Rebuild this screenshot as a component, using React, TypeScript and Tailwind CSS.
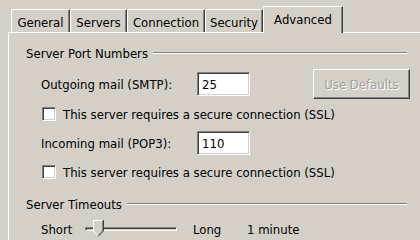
import React from 'react';

const FONT = "font-['DejaVu_Sans_Condensed','Liberation_Sans',sans-serif] text-[13px] leading-none text-black";

const Tab: React.FC<{ label: string; width: string; selected?: boolean }> = ({ label, width, selected }) => {
    if (selected) {
        return (
            <div
                className={`relative z-10 -mb-px flex h-[27px] items-start justify-center rounded-tl-[2px] border-l border-t border-r border-white border-r-[#404040] bg-[#d4d0c8] pt-[6px] shadow-[inset_-1px_0_0_#808080] ${width}`}
            >
                {label}
            </div>
        );
    }
    return (
        <div
            className={`flex h-[23px] items-start justify-center rounded-tl-[2px] border-l border-t border-r border-white border-r-[#404040] pt-[6px] shadow-[inset_-1px_0_0_#808080] ${width}`}
        >
            {label}
        </div>
    );
};

const GroupHeader: React.FC<{ label: string; className?: string }> = ({ label, className }) => (
    <div className={`flex h-[16px] items-center pl-[17px] pr-[13px] ${className ?? ''}`}>
        <span>{label}</span>
        <div className="ml-[5px] h-[2px] flex-1 border-t border-b border-t-[#808080] border-b-white" />
    </div>
);

const Sunken: React.FC<{ className: string; children?: React.ReactNode }> = ({ className, children }) => (
    <div
        className={`border border-t-[#808080] border-l-[#808080] border-b-white border-r-white bg-white shadow-[inset_1px_1px_0_#404040,inset_-1px_-1px_0_#d4d0c8] ${className}`}
    >
        {children}
    </div>
);

const Checkbox: React.FC<{ label: string; className?: string }> = ({ label, className }) => (
    <div className={`flex h-[16px] items-center pl-[33px] ${className ?? ''}`}>
        <Sunken className="h-[14px] w-[14px]" />
        <span className="ml-[7px]">{label}</span>
    </div>
);

const PortField: React.FC<{ value: string }> = ({ value }) => (
    <Sunken className="flex h-[24px] w-[53px] items-center pl-[4px]">{value}</Sunken>
);

export default function App() {
    return (
        <div className={`h-[240px] w-[420px] overflow-hidden bg-[#d4d0c8] ${FONT}`}>
            <div className="flex h-[32px] items-end pl-[11px]">
                <Tab label="General" width="w-[59px]" />
                <Tab label="Servers" width="w-[57px]" />
                <Tab label="Connection" width="w-[78px]" />
                <Tab label="Security" width="w-[58px]" />
                <Tab label="Advanced" width="w-[80px]" selected />
            </div>

            <div className="ml-[8px] h-[208px] border-l border-t border-white">
                <GroupHeader label="Server Port Numbers" className="mt-[12px]" />

                <div className="mt-[8px] flex h-[30px] items-center pl-[32px] pr-[10px]">
                    <span className="w-[156px]">Outgoing mail (SMTP):</span>
                    <PortField value="25" />
                    <button className="ml-auto h-[30px] w-[97px] border border-t-white border-l-white border-b-[#404040] border-r-[#404040] text-[#a0a0a0] shadow-[inset_-1px_-1px_0_#808080] [text-shadow:1px_1px_0_#ffffff]">
                        Use Defaults
                    </button>
                </div>

                <Checkbox label="This server requires a secure connection (SSL)" className="mt-[7px]" />

                <div className="mt-[9px] flex h-[24px] items-center pl-[32px]">
                    <span className="w-[156px]">Incoming mail (POP3):</span>
                    <PortField value="110" />
                </div>

                <Checkbox label="This server requires a secure connection (SSL)" className="mt-[9px]" />

                <GroupHeader label="Server Timeouts" className="mt-[16px]" />

                <div className="mt-[9px] flex h-[16px] items-center pl-[32px]">
                    <span className="w-[44px]">Short</span>
                    <div className="relative h-[16px] w-[92px]">
                        <div className="absolute left-0 right-0 top-[6px] h-[4px] border border-t-[#808080] border-l-[#808080] border-b-white border-r-white shadow-[inset_1px_1px_0_#404040]" />
                        <svg className="absolute left-[8px] top-[-1px]" width="11" height="17" viewBox="0 0 11 17">
                            <polygon points="0.5,0.5 9.5,0.5 9.5,11 5,15.5 0.5,11" fill="#d4d0c8" />
                            <polyline points="0.5,11 0.5,0.5 9.5,0.5" fill="none" stroke="#ffffff" strokeWidth="1" />
                            <polyline points="10.5,0 10.5,11 5,16.5" fill="none" stroke="#404040" strokeWidth="1" />
                            <polyline points="9.5,1 9.5,10.8 5,15.3" fill="none" stroke="#808080" strokeWidth="1" />
                            <line x1="0.5" y1="11" x2="5" y2="15.5" stroke="#ffffff" strokeWidth="1" />
                        </svg>
                    </div>
                    <span className="ml-[16px] w-[54px]">Long</span>
                    <span>1 minute</span>
                </div>
            </div>
        </div>
    );
}
